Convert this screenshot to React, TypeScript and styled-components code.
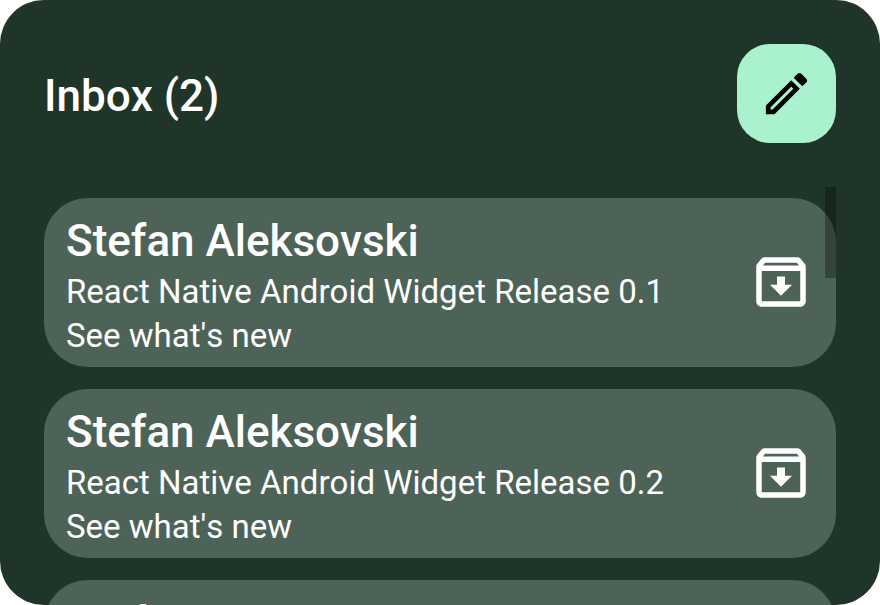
import React from "react";
import styled, { createGlobalStyle } from "styled-components";

const GlobalStyle = createGlobalStyle`
  * { box-sizing: border-box; }
  body {
    margin: 0;
    background: #fff;
    font-family: Roboto, sans-serif;
    font-kerning: none;
  }
`;

const Widget = styled.main`
  display: flex;
  flex-direction: column;
  height: 100vh;
  overflow: hidden;
  padding: 44px 44px 0;
  border-radius: 44px;
  background: #20352a;
  color: #fff;
`;

const Header = styled.header`
  display: flex;
  flex: none;
  align-items: center;
  justify-content: space-between;
`;

const Title = styled.h1`
  margin: 0;
  padding-top: 4px;
  font-size: 44px;
  line-height: 52px;
  font-weight: 500;
`;

const ComposeButton = styled.button`
  display: grid;
  place-items: center;
  width: 99px;
  height: 99px;
  padding: 0;
  border: 0;
  border-radius: 33px;
  background: #aaf2ce;
  color: #000;
`;

const MailArea = styled.section`
  position: relative;
  flex: 1;
  min-height: 0;
  margin-top: 44px;
  overflow: hidden;
`;

const MailList = styled.ul`
  display: flex;
  flex-direction: column;
  gap: 22px;
  margin: 0;
  padding: 11px 0;
  list-style: none;
`;

const MailCard = styled.li`
  display: flex;
  align-items: center;
  justify-content: space-between;
  padding: 0 22px;
  border-radius: 44px;
  background: #4e6357;
`;

const MailText = styled.div`
  min-width: 0;
  padding: 15px 0 9px;
`;

const Sender = styled.h2`
  margin: 0;
  font-size: 44px;
  line-height: 57px;
  font-weight: 500;
`;

const Line = styled.p`
  margin: 0;
  font-size: 33px;
  line-height: 44px;
`;

const ArchiveButton = styled.button`
  display: grid;
  flex: none;
  place-items: start center;
  height: 67px;
  padding: 0;
  border: 0;
  background: none;
  color: #fff;
`;

const ScrollThumb = styled.div`
  position: absolute;
  top: 0;
  right: 0;
  width: 11px;
  height: 91px;
  background: rgba(0, 0, 0, 0.3);
`;

const PencilIcon = () => (
  <svg width="55" height="55" viewBox="0 0 24 24" fill="currentColor" aria-hidden="true">
    <path d="m14.06 9.02.92.92L5.92 19H5v-.92l9.06-9.06M17.66 3c-.25 0-.51.1-.7.29l-1.83 1.83 3.75 3.75 1.83-1.83c.39-.39.39-1.02 0-1.41l-2.34-2.34c-.2-.2-.45-.29-.71-.29zm-3.6 3.19L3 17.25V21h3.75L17.81 9.94l-3.75-3.75z" />
  </svg>
);

const ArchiveIcon = () => (
  <svg width="66" height="66" viewBox="0 0 24 24" fill="currentColor" aria-hidden="true">
    <path d="m20.54 5.23-1.39-1.68C18.88 3.21 18.47 3 18 3H6c-.47 0-.88.21-1.16.55L3.46 5.23C3.17 5.57 3 6.02 3 6.5V19c0 1.1.9 2 2 2h14c1.1 0 2-.9 2-2V6.5c0-.48-.17-.93-.46-1.27zM6.24 5h11.52l.83 1H5.42l.82-1zM5 19V8h14v11H5zm8.45-9h-2.9v3H8l4 4 4-4h-2.55z" />
  </svg>
);

const mails = ["0.1", "0.2", "0.3"].map((version) => ({
  sender: "Stefan Aleksovski",
  subject: `React Native Android Widget Release ${version}`,
  preview: "See what's new",
}));

export default function App() {
  return (
    <>
      <GlobalStyle />
      <Widget>
        <Header>
          <Title>Inbox (2)</Title>
          <ComposeButton type="button" aria-label="Compose">
            <PencilIcon />
          </ComposeButton>
        </Header>
        <MailArea aria-label="Messages">
          <MailList>
            {mails.map((mail) => (
              <MailCard key={mail.subject}>
                <MailText>
                  <Sender>{mail.sender}</Sender>
                  <Line>{mail.subject}</Line>
                  <Line>{mail.preview}</Line>
                </MailText>
                <ArchiveButton type="button" aria-label={`Archive ${mail.subject}`}>
                  <ArchiveIcon />
                </ArchiveButton>
              </MailCard>
            ))}
          </MailList>
          <ScrollThumb />
        </MailArea>
      </Widget>
    </>
  );
}
